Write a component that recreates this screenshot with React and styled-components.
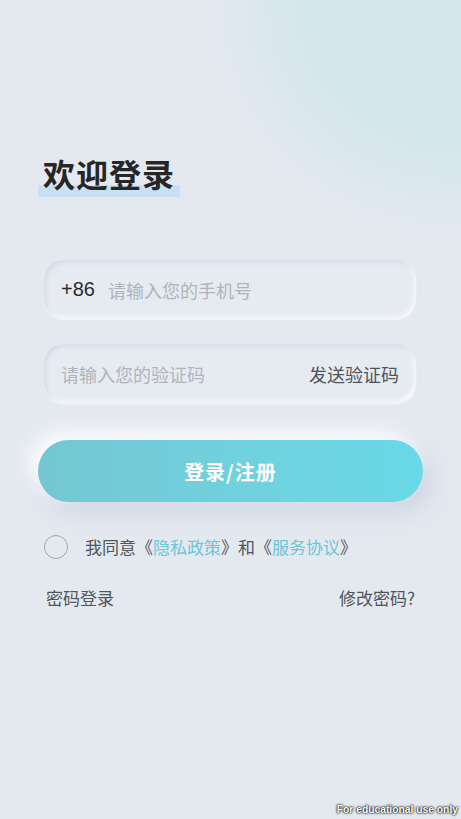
import React from 'react';
import styled, { createGlobalStyle } from 'styled-components';

const GlobalStyle = createGlobalStyle`
    html, body {
        margin: 0;
        padding: 0;
        background: #e4e9f0;
    }
    body {
        font-family: "Noto Sans CJK SC", "Noto Sans", sans-serif;
    }
`

const Page = styled.div`
    position: relative;
    width: 461px;
    height: 819px;
    overflow: hidden;
    box-sizing: border-box;
    padding: 151px 38px 0;
    background:
        radial-gradient(ellipse 250px 240px at 455px 0px, #d2e6ec 0%, #d3e6ec 58%, rgba(212, 231, 237, 0) 100%),
        #e4e9f0;
`

const TitleWrap = styled.div`
    display: inline-block;
    position: relative;
    padding: 0 5px;
`

const Highlight = styled.span`
    position: absolute;
    left: 0;
    right: 0;
    bottom: -2px;
    height: 12px;
    background: #c8e0f3;
`

const Title = styled.h1`
    position: relative;
    margin: 0;
    font-size: 32px;
    line-height: 44px;
    font-weight: 700;
    color: #262626;
    letter-spacing: 1px;
`

const Form = styled.div`
    display: flex;
    flex-direction: column;
    gap: 25px;
    margin: 65px 7px 0 6px;
`

const Field = styled.div`
    display: flex;
    align-items: center;
    height: 59px;
    padding: 0 17px;
    border-radius: 20px;
    background: #e6ebf2;
    box-shadow:
        inset 2px 2px 4px rgba(170, 180, 200, 0.3),
        inset -2px -2px 4px rgba(255, 255, 255, 0.8),
        0 1px 2px rgba(255, 255, 255, 0.6);
    font-size: 18px;
`

const Prefix = styled.span`
    color: #2b2b2b;
    font-family: "Liberation Sans", "Noto Sans", sans-serif;
    font-size: 20px;
    margin-right: 13px;
`

const Placeholder = styled.span`
    flex: 1;
    color: #b0b4ba;
`

const SendCode = styled.span`
    color: #50555b;
`

const LoginButton = styled.button`
    display: block;
    width: 100%;
    height: 62px;
    margin-top: 37px;
    border: none;
    border-radius: 31px;
    background: linear-gradient(90deg, #74c7d2 0%, #70d2df 60%, #68d9e7 100%);
    box-shadow:
        -8px -8px 20px rgba(255, 255, 255, 0.9),
        8px 10px 22px rgba(160, 175, 200, 0.35);
    color: #fff;
    font-family: "Noto Sans CJK SC", sans-serif;
    font-size: 20px;
    font-weight: 700;
    letter-spacing: 1px;
`

const AgreeRow = styled.div`
    display: flex;
    align-items: center;
    margin-top: 32px;
    padding-left: 6px;
    font-size: 17px;
    color: #50555b;
`

const Circle = styled.span`
    width: 22px;
    height: 22px;
    border-radius: 50%;
    border: 1.5px solid #a3a6aa;
    margin-right: 17px;
    flex-shrink: 0;
`

const Link = styled.span`
    color: #6cc6d6;
`

const Footer = styled.div`
    display: flex;
    justify-content: space-between;
    margin-top: 26px;
    padding: 0 8px;
    font-size: 17px;
    color: #50555b;
`

const Watermark = styled.div`
    position: absolute;
    right: 3px;
    bottom: 4px;
    font-family: "Liberation Sans", sans-serif;
    font-size: 10.3px;
    font-weight: 700;
    color: #fff;
    text-shadow: 0 0 1px #000, 0 0 2px rgba(0, 0, 0, 0.9), 0 0 3px rgba(0, 0, 0, 0.6);
`

const App = () => {
    return <Page>
        <GlobalStyle />
        <TitleWrap>
            <Highlight />
            <Title>欢迎登录</Title>
        </TitleWrap>
        <Form>
            <Field>
                <Prefix>+86</Prefix>
                <Placeholder>请输入您的手机号</Placeholder>
            </Field>
            <Field>
                <Placeholder>请输入您的验证码</Placeholder>
                <SendCode>发送验证码</SendCode>
            </Field>
        </Form>
        <LoginButton>登录/注册</LoginButton>
        <AgreeRow>
            <Circle />
            <span>我同意《<Link>隐私政策</Link>》和《<Link>服务协议</Link>》</span>
        </AgreeRow>
        <Footer>
            <span>密码登录</span>
            <span>修改密码?</span>
        </Footer>
        <Watermark>For educational use only</Watermark>
    </Page>
}

export default App;
